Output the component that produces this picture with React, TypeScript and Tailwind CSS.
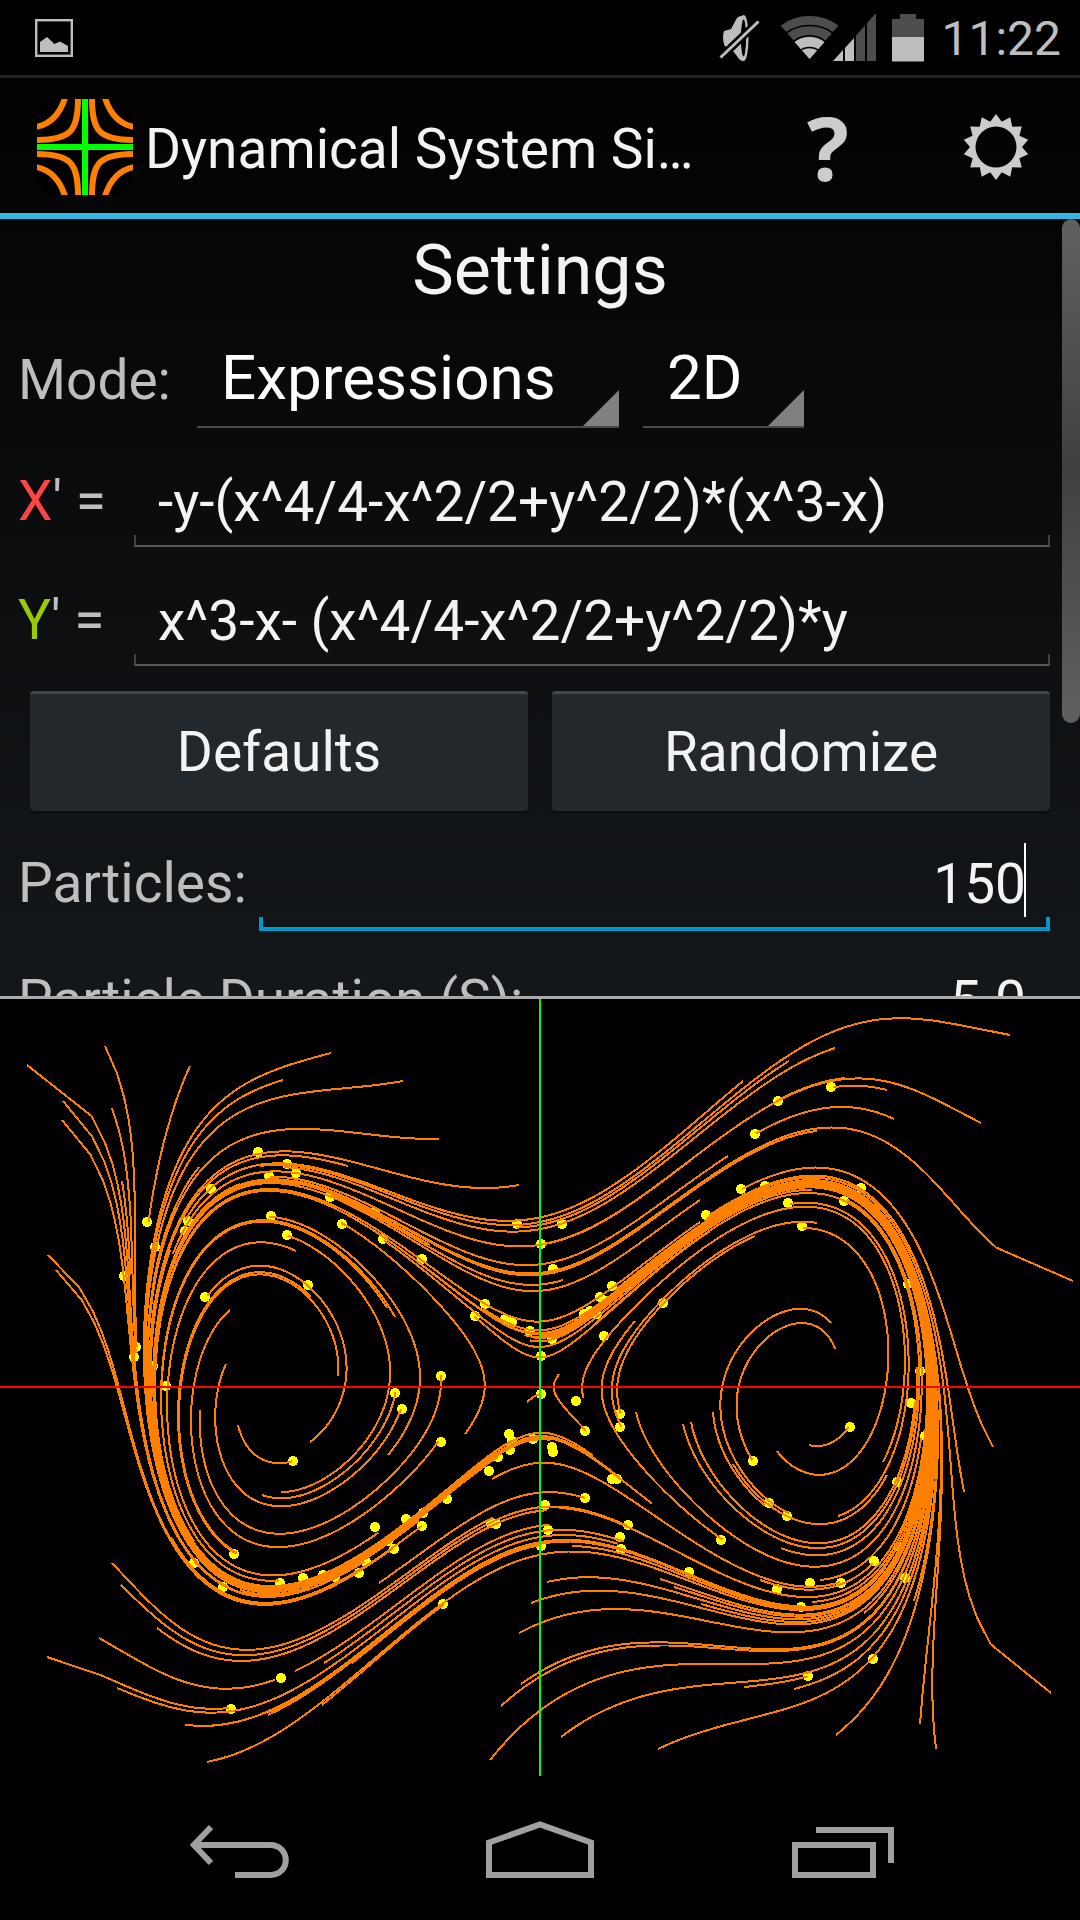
import React from "react";

const ORIGIN_X = 540;
const ORIGIN_Y = 1387;
const UNIT = 270;
const STEP = 0.025;
const MAX_STEPS = 200;

// Each trail: start x, start y, head x, head y (view-box coordinates).
const TRAILS: number[][] = [
  [27, 1065, 223, 1587], [63, 1101, 303, 1578], [62, 1120, 366, 1562], [105, 1046, 136, 1347],
  [112, 1108, 134, 1357], [122, 1181, 124, 1272], [48, 1255, 394, 1549], [56, 1270, 359, 1573],
  [190, 1066, 147, 1222], [331, 1053, 423, 1513], [283, 1080, 489, 1471], [403, 1081, 498, 1457],
  [439, 1139, 552, 1450], [519, 1185, 388, 1541], [199, 1167, 447, 1499], [348, 1166, 533, 1439],
  [1010, 1035, 258, 1152], [835, 1048, 287, 1164], [789, 1061, 517, 1224], [743, 1081, 188, 1221],
  [981, 1123, 541, 1244], [887, 1090, 831, 1087], [894, 1119, 755, 1134], [1073, 1281, 296, 1173],
  [817, 1131, 211, 1189], [728, 1156, 269, 1176], [691, 1160, 155, 1247], [700, 1200, 153, 1366],
  [710, 1231, 475, 1316], [563, 1280, 330, 1197], [845, 1078, 778, 1101], [817, 1223, 620, 1427],
  [755, 1236, 620, 1414], [635, 1321, 721, 1540], [559, 1374, 585, 1431], [831, 1323, 787, 1516],
  [835, 1349, 753, 1461], [777, 1451, 802, 1226], [809, 1445, 850, 1427], [993, 1447, 741, 1189],
  [964, 1492, 706, 1215], [1051, 1693, 706, 1215], [936, 1749, 628, 1285], [920, 1724, 612, 1286],
  [836, 1735, 861, 1188], [658, 1749, 765, 1186], [561, 1737, 861, 1188], [490, 1760, 765, 1186],
  [501, 1706, 600, 1297], [521, 1684, 605, 1301], [519, 1633, 584, 1314], [531, 1603, 597, 1314],
  [547, 1582, 706, 1215], [492, 1479, 841, 1583], [744, 1687, 808, 1672], [794, 1689, 908, 1284],
  [914, 1601, 485, 1304], [701, 1604, 505, 1319], [674, 1587, 512, 1322], [660, 1579, 530, 1331],
  [812, 1602, 552, 1339], [864, 1613, 541, 1356], [572, 1546, 590, 1311], [559, 1508, 706, 1215],
  [781, 1548, 604, 1336], [838, 1516, 788, 1203], [883, 1462, 576, 1400], [713, 1412, 769, 1503],
  [691, 1422, 911, 1403], [683, 1424, 920, 1371], [636, 1412, 844, 1201], [733, 1464, 897, 1482],
  [112, 1563, 496, 1524], [121, 1585, 628, 1525], [157, 1628, 545, 1505], [99, 1638, 276, 1681],
  [47, 1657, 225, 1710], [117, 1688, 620, 1537], [185, 1725, 777, 1589], [197, 1726, 801, 1607],
  [207, 1762, 905, 1578], [267, 1713, 689, 1572], [268, 1715, 899, 1547], [295, 1671, 548, 1530],
  [322, 1705, 443, 1604], [324, 1663, 621, 1549], [352, 1663, 541, 1546], [379, 1583, 585, 1498],
  [171, 1537, 422, 1526], [238, 1425, 293, 1461], [200, 1410, 441, 1376], [310, 1442, 205, 1297],
  [262, 1495, 395, 1393], [281, 1492, 287, 1235], [388, 1455, 271, 1216], [465, 1434, 342, 1224],
  [527, 1402, 541, 1394], [230, 1310, 441, 1442], [226, 1364, 402, 1409], [296, 1251, 375, 1527],
  [311, 1297, 234, 1554], [338, 1376, 234, 1554], [387, 1308, 166, 1386], [395, 1317, 280, 1583],
  [430, 1245, 194, 1563], [812, 1190, 383, 1239], [812, 1184, 422, 1259],
  [800, 1188, 510, 1450], [700, 1222, 323, 1575], [620, 1290, 335, 1577],
  [300, 1186, 512, 1441], [240, 1184, 509, 1434], [206, 1206, 612, 1479], [170, 1250, 617, 1479],
  [155, 1300, 498, 1457], [150, 1340, 810, 1583], [200, 1560, 447, 1499], [240, 1590, 422, 1526],
  [760, 1580, 874, 1561], [820, 1580, 925, 1436],
];

const PARTICLES: number[][] = [
  [258, 1152], [287, 1164], [296, 1173], [269, 1176], [211, 1189], [147, 1222], [188, 1221],
  [185, 1231], [155, 1247], [124, 1276], [271, 1216], [287, 1235], [330, 1197], [375, 1212],
  [342, 1224], [383, 1239], [422, 1259], [308, 1285], [205, 1297], [136, 1347], [134, 1357],
  [153, 1366], [166, 1386], [441, 1376], [395, 1393], [517, 1224], [485, 1304], [475, 1316],
  [505, 1319], [512, 1322], [530, 1331], [541, 1244], [541, 1356], [541, 1394], [562, 1224],
  [778, 1101], [831, 1087], [755, 1134], [741, 1189], [765, 1186], [706, 1215], [861, 1188],
  [844, 1201], [788, 1203], [802, 1226], [553, 1269], [612, 1286], [605, 1301], [600, 1297],
  [628, 1285], [590, 1311], [584, 1314], [597, 1314], [552, 1339], [604, 1336], [663, 1303],
  [908, 1284], [920, 1371], [576, 1401], [911, 1403], [402, 1409], [293, 1461], [441, 1442],
  [509, 1434], [512, 1441], [533, 1439], [498, 1457], [489, 1471], [447, 1499], [496, 1524],
  [491, 1523], [234, 1554], [375, 1527], [406, 1519], [422, 1526], [423, 1513], [394, 1549],
  [388, 1541], [359, 1573], [366, 1562], [194, 1563], [223, 1587], [280, 1583], [303, 1578],
  [323, 1575], [335, 1577], [443, 1604], [281, 1678], [231, 1709], [510, 1450], [585, 1431],
  [620, 1414], [620, 1427], [552, 1447], [553, 1452], [612, 1479], [617, 1479], [585, 1498],
  [545, 1505], [628, 1525], [620, 1537], [621, 1549], [548, 1530], [541, 1546], [689, 1572],
  [721, 1540], [753, 1461], [769, 1503], [787, 1516], [850, 1427], [897, 1482], [925, 1436],
  [810, 1583], [777, 1589], [841, 1583], [874, 1561], [801, 1607], [808, 1676], [873, 1659],
  [905, 1578], [899, 1547],
];

// Integrates the system from the trail's start and keeps the part that leads up to its head.
function tracePoints([sx, sy, hx, hy]: number[]): string {
  let x = (sx - ORIGIN_X) / UNIT;
  let y = (ORIGIN_Y - sy) / UNIT;
  const points: string[] = [];
  let best = Infinity;
  let bestIndex = 0;
  for (let i = 0; i <= MAX_STEPS; i++) {
    const px = ORIGIN_X + x * UNIT;
    const py = ORIGIN_Y - y * UNIT;
    points.push(`${px.toFixed(1)},${py.toFixed(1)}`);
    const distance = Math.hypot(px - hx, py - hy);
    if (distance < best) {
      best = distance;
      bestIndex = i;
    }
    const h = x ** 4 / 4 - x ** 2 / 2 + y ** 2 / 2;
    const dx = -y - h * (x ** 3 - x);
    const dy = x ** 3 - x - h * y;
    x += dx * STEP;
    y += dy * STEP;
  }
  return points.slice(0, bestIndex + 1).join(" ");
}

const PATHS = TRAILS.map(tracePoints);

function PhasePlot() {
  return (
    <svg
      viewBox="0 999 1080 777"
      className="block w-full shrink-0 bg-black"
      role="img"
      aria-label="Phase portrait"
      shapeRendering="crispEdges"
    >
      <g fill="#ffff00">
        {PARTICLES.map(([x, y], i) => (
          <circle key={i} cx={x} cy={y} r={5} />
        ))}
      </g>
      <g fill="none" stroke="#ff8000" strokeWidth={2}>
        {PATHS.map((points, i) => (
          <polyline key={i} points={points} />
        ))}
      </g>
      <rect x={0} y={1386} width={1080} height={2} fill="#ff0000" />
      <rect x={539} y={999} width={2} height={777} fill="#00ff00" />
    </svg>
  );
}

function StatusBar() {
  return (
    <div className="flex h-[78px] shrink-0 items-center justify-between border-b-[3px] border-[#202020] bg-black pl-[35px] pr-[19px]">
      <svg width="38" height="38" viewBox="0 0 38 38" aria-label="Picture">
        <rect x="1.2" y="1.2" width="35.6" height="35.6" fill="none" stroke="#bebebe" strokeWidth="2.4" />
        <path d="M5 23 L12 18 L19.5 25 L25 22.5 L33 27 V33 H5 Z" fill="#bebebe" />
      </svg>
      <div className="flex items-center">
        <svg width="42" height="48" viewBox="719 13 42 48" aria-label="Muted" className="mr-[19px]">
          <path d="M724 30 L731 28 L737 17 Q741 13 745 17 Q750 37 745 59 Q741 62 737 55 L733 50 L731 47 Q724 46 724 43 Q722 36 724 30 Z" fill="#bebebe" />
          <ellipse cx="743.500" cy="37" rx="2.600" ry="18.500" fill="#000" />
          <ellipse cx="743.500" cy="37" rx="4" ry="22" fill="none" stroke="#bebebe" strokeWidth="2" />
          <path d="M719 58 L761 18" stroke="#000" strokeWidth="8" />
          <path d="M720.500 56.500 L758.500 20.500" stroke="#bebebe" strokeWidth="3" />
        </svg>
        <svg width="96" height="48" viewBox="780 13 96 48" aria-label="Wi-Fi and signal" className="mr-4">
          <path d="M809.600 58 L780.700 24.500 Q793 15 809.600 15 Q826 15 838.500 24.500 Z" fill="#4d4d4d" />
          <path d="M809.600 58 L794.500 41 Q801 36 809.600 36 Q818 36 824.500 41 Z" fill="#bebebe" />
          <g fill="none" stroke="#000" strokeWidth="1.600">
            <path d="M786 32 Q796 24.500 809.600 24.500 Q823 24.500 833 32" />
            <path d="M793 41 Q800 34.800 809.600 34.800 Q819 34.800 826 41" />
            <path d="M800.500 49.500 Q804 46.500 809.600 46.500 Q815 46.500 818.500 49.500" />
          </g>
          <path d="M833 60 L843 49 V60 Z M845 60 V47 L854 37 V60 Z" fill="#bebebe" />
          <path d="M856 60 V34.500 L865 24.500 V60 Z M867 60 V22 L876 12 V60 Z" fill="#4d4d4d" />
        </svg>
        <svg width="32" height="48" viewBox="0 0 32 48" aria-label="Battery" className="mr-[17px]">
          <path d="M8 0 H24 V5 H32 V23 H0 V5 H8 Z" fill="#4d4d4d" />
          <rect y="23" width="32" height="24.500" fill="#bebebe" />
        </svg>
        <span className="pt-0.5 text-[48px] leading-none text-[#bebebe]">11:22</span>
      </div>
    </div>
  );
}

const GEAR_POINTS = Array.from({ length: 28 }, (_, i) => {
  const r = i % 2 === 0 ? 33 : 26;
  const a = (i * Math.PI) / 14 - Math.PI / 2;
  return `${(33 + r * Math.cos(a)).toFixed(1)},${(33 + r * Math.sin(a)).toFixed(1)}`;
}).join("L");

function ActionBar() {
  return (
    <header className="flex h-[141px] shrink-0 items-center border-b-[6px] border-[#33b5e5] pl-[37px] pt-[3px]">
      <svg width="96" height="96" viewBox="0 0 96 96" aria-hidden="true" className="rounded-[20px]">
        <rect width="96" height="96" fill="#000" />
        <g fill="none" stroke="#ff8000" strokeWidth="6">
          <path d="M28 -1 Q20 24 -1 28" />
          <path d="M41 -1 C41 32 34 41 -1 41" />
          <path d="M68 -1 Q76 24 97 28" />
          <path d="M55 -1 C55 32 62 41 97 41" />
          <path d="M28 97 Q20 72 -1 68" />
          <path d="M41 97 C41 64 34 55 -1 55" />
          <path d="M68 97 Q76 72 97 68" />
          <path d="M55 97 C55 64 62 55 97 55" />
        </g>
        <path d="M48 0 V96 M0 48 H96" stroke="#00ff00" strokeWidth="6" />
      </svg>
      <h1 className="ml-3 flex-1 whitespace-nowrap pt-1 text-[55px] leading-none">Dynamical System Si…</h1>
      <button
        type="button"
        aria-label="Help"
        className="w-[168px] text-center font-['Open_Sans',sans-serif] text-[88px] font-bold leading-none text-[#cccccc]"
      >
        ?
      </button>
      <button type="button" aria-label="Settings" className="flex w-[168px] justify-center">
        <svg width="66" height="66" viewBox="0 0 66 66">
          <path d={`M${GEAR_POINTS}ZM12.500 33a20.500 20.500 0 1 0 41 0a20.500 20.500 0 1 0 -41 0Z`} fill="#cccccc" fillRule="evenodd" />
        </svg>
      </button>
    </header>
  );
}

function Bracket({ active = false }: { active?: boolean }) {
  return (
    <span
      className={
        active
          ? "pointer-events-none absolute inset-x-0 bottom-0 h-[14px] border-x-[4px] border-b-[4px] border-[#0099cc]"
          : "pointer-events-none absolute inset-x-0 bottom-0 h-3 border-x-2 border-b-2 border-x-[#404243] border-b-[#58595a]"
      }
    />
  );
}

function Spinner({ label, value, options, className }: { label: string; value: string; options: string[]; className: string }) {
  return (
    <span className={className}>
      <select
        aria-label={label}
        defaultValue={value}
        className="h-[98px] w-full appearance-none bg-transparent pl-6 text-[62px] text-white outline-none"
      >
        {options.map((option) => (
          <option key={option}>{option}</option>
        ))}
      </select>
      <svg width="36" height="36" viewBox="0 0 36 36" className="pointer-events-none absolute bottom-0 right-0" aria-hidden="true">
        <path d="M36 0 V36 H0 Z" fill="#808080" />
      </svg>
    </span>
  );
}

function Equation({ id, letter, color, value }: { id: string; letter: string; color: string; value: string }) {
  return (
    <div className="mb-7 flex items-center">
      <label htmlFor={id} className="w-[116px] text-[55px] leading-none">
        <span className={color}>{letter}</span>' =
      </label>
      <span className="relative flex-1">
        <input
          id={id}
          defaultValue={value}
          className="block h-[91px] w-full bg-transparent px-6 text-[55px] text-[#f3f3f3] outline-none"
        />
        <Bracket />
      </span>
    </div>
  );
}

function SettingsPanel() {
  return (
    <main className="relative min-h-0 flex-1 overflow-hidden pl-[18px] pr-[30px] text-[#bebebe]">
      <h2 className="mb-[7px] pl-3 text-center text-[70px] leading-[102px] text-[#f3f3f3]">Settings</h2>
      <div className="mb-7 flex items-baseline">
        <span className="w-[179px] text-[55px] leading-none">Mode:</span>
        <Spinner
          label="Mode"
          value="Expressions"
          options={["Expressions", "Matrix"]}
          className="relative w-[422px] border-b-2 border-[#484949]"
        />
        <Spinner
          label="Dimensions"
          value="2D"
          options={["2D", "3D"]}
          className="relative ml-6 w-[161px] border-b-2 border-[#484949]"
        />
      </div>
      <Equation id="eq-x" letter="X" color="text-[#ff4444]" value="-y-(x^4/4-x^2/2+y^2/2)*(x^3-x)" />
      <Equation id="eq-y" letter="Y" color="text-[#99cc00]" value="x^3-x- (x^4/4-x^2/2+y^2/2)*y" />
      <div className="-mt-[3px] mb-[25px] grid grid-cols-2 gap-6 pl-3">
        {["Defaults", "Randomize"].map((name) => (
          <button
            key={name}
            type="button"
            className="h-[120px] rounded-[4px] border-t-[3px] border-[#43474a] bg-[#23282c] text-[55px] text-[#f3f3f3] shadow-[0_2px_1px_#0c0d0e]"
          >
            {name}
          </button>
        ))}
      </div>
      <div className="mb-6 flex items-center">
        <label htmlFor="particles" className="mr-3 text-[55px] leading-none">
          Particles:
        </label>
        <span className="relative flex-1">
          <input
            id="particles"
            defaultValue="150"
            inputMode="numeric"
            className="block h-[95px] w-full bg-transparent pr-6 text-right text-[55px] text-[#f3f3f3] outline-none"
          />
          <span className="absolute bottom-[14px] right-6 h-[74px] w-0.5 bg-white" />
          <Bracket active />
        </span>
      </div>
      <div className="flex items-center">
        <label htmlFor="duration" className="mr-3 text-[55px] leading-none">
          Particle Duration (S):
        </label>
        <span className="relative flex-1">
          <input
            id="duration"
            defaultValue="5.0"
            inputMode="decimal"
            className="block h-[91px] w-full bg-transparent pr-6 text-right text-[55px] text-[#f3f3f3] outline-none"
          />
          <Bracket />
        </span>
      </div>
      <div className="absolute right-0 top-0 h-[504px] w-[18px] rounded-full bg-linear-to-b/srgb from-[#606060] via-[#404040] to-[#606060]" />
    </main>
  );
}

function NavigationBar() {
  return (
    <nav className="flex h-36 shrink-0 items-center bg-black px-[90px] pt-1">
      <button type="button" aria-label="Back" className="flex flex-1 justify-center">
        <svg width="100" height="60" viewBox="190 1820 100 60" fill="none" stroke="#a0a0a0" strokeWidth="6">
          <path d="M211 1827 L194 1845 L211 1863" />
          <path d="M196 1845 H270 C291 1845 291 1875 270 1875 H235" />
        </svg>
      </button>
      <button type="button" aria-label="Home" className="flex flex-1 justify-center">
        <svg width="108" height="60" viewBox="486 1820 108 60" fill="none" stroke="#a0a0a0" strokeWidth="6">
          <path d="M489 1875 V1842.500 L540 1824.500 L591 1842.500 V1875 Z" />
        </svg>
      </button>
      <button type="button" aria-label="Recent apps" className="flex flex-1 justify-center">
        <svg width="108" height="60" viewBox="786 1820 108 60" fill="none" stroke="#a0a0a0" strokeWidth="6">
          <path d="M816 1830 H891 V1863" />
          <path d="M795 1845 H873 V1875 H795 Z" />
        </svg>
      </button>
    </nav>
  );
}

export default function App() {
  return (
    <div className="flex h-screen flex-col overflow-hidden bg-linear-to-b/srgb from-black to-[#272d33] font-[Roboto,sans-serif] text-[#f3f3f3]">
      <StatusBar />
      <ActionBar />
      <SettingsPanel />
      <div className="shrink-0 border-t-[3px] border-[#aaaaaa]">
        <PhasePlot />
      </div>
      <NavigationBar />
    </div>
  );
}
